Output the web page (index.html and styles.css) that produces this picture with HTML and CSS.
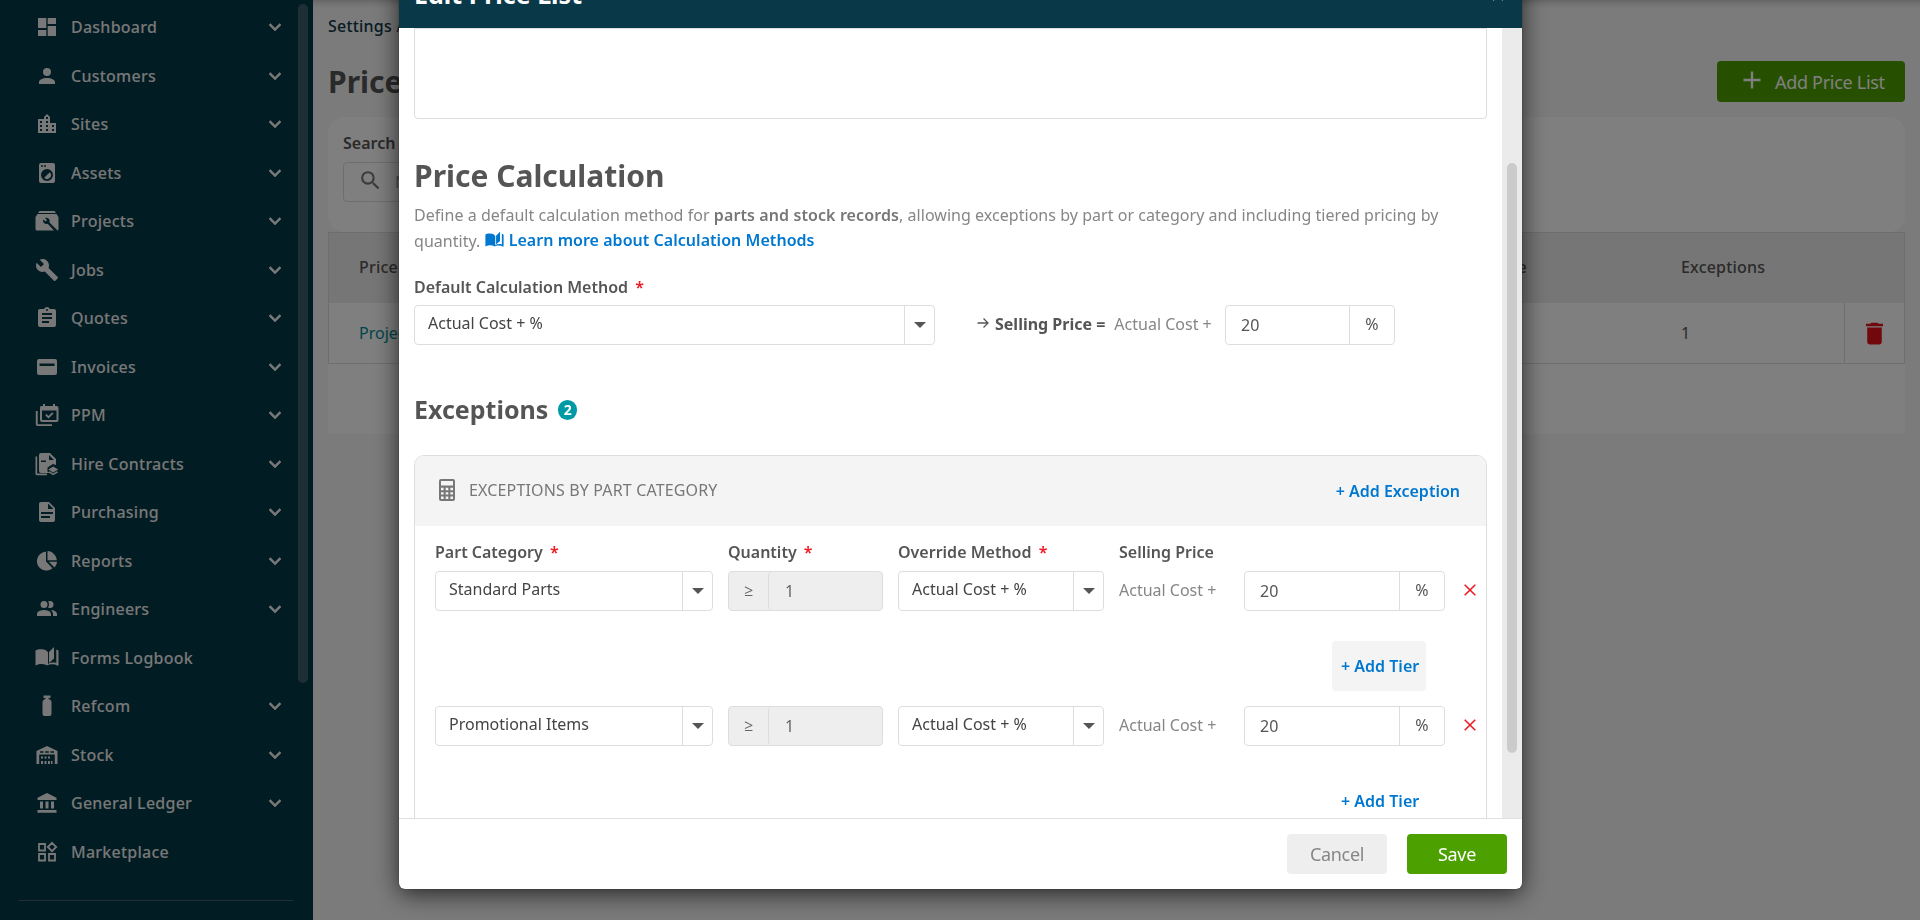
FILE: index.html
```html
<!DOCTYPE html>
<html lang="en">
<head>
    <meta charset="UTF-8">
    <meta name="viewport" content="width=device-width, initial-scale=1.0">
    <title>Price Lists</title>
    <link rel="stylesheet" href="styles.css">
</head>
<body>
    <svg class="defs">
        <symbol id="chevron" viewBox="0 0 24 24"><path d="M7.41 8.58L12 13.17l4.59-4.59L18 10l-6 6-6-6z"/></symbol>
        <symbol id="book" viewBox="0 0 24 24"><path fill-rule="evenodd" d="M0.5 4.5C3 2.9 8 2.6 11.5 4.5V19C8 17.6 4 17.6 1.3 19.2Q0.5 19.6 0.5 19zM19 1l-5 5v11l5-4.5zM23.5 4.6q-1-.7-2.2-1V17c-2.700-.8-6-.5-8.300 1V6l-1.500-1v14.5c3.500-1.700 8-1.700 10.700 0 .7.4 1.300.200 1.300-.5z"/></symbol>
    </svg>
    <div class="app">
        <nav class="sidebar">
            <ul class="menu">
                <li><svg class="icon" viewBox="0 0 24 24"><path d="M3 13h8.300V3H3zM3 21h8.300v-6H3zM12.700 21H21V11h-8.300zM12.700 3v6H21V3z"/></svg><span>Dashboard</span><svg class="chev"><use href="#chevron"/></svg></li>
                <li><svg class="icon" viewBox="0 0 24 24"><path d="M12 4a4 4 0 0 1 4 4 4 4 0 0 1-4 4 4 4 0 0 1-4-4 4 4 0 0 1 4-4m0 10c4.420 0 8 1.790 8 4v2H4v-2c0-2.210 3.580-4 8-4z"/></svg><span>Customers</span><svg class="chev"><use href="#chevron"/></svg></li>
                <li><svg class="icon" viewBox="0 0 24 24"><path d="M19 15h-2v-2h2m0 6h-2v-2h2M13 7h-2V5h2m0 6h-2V9h2m0 6h-2v-2h2m0 6h-2v-2h2M7 11H5V9h2m0 6H5v-2h2m0 6H5v-2h2m8-6V5l-3-3-3 3v2H3v14h18V11z"/></svg><span>Sites</span><svg class="chev"><use href="#chevron"/></svg></li>
                <li><svg class="icon" viewBox="0 0 24 24"><path d="M14.830 11.170a4 4 0 0 1 0 5.660 4 4 0 0 1-5.660 0zM6 2h12a2 2 0 0 1 2 2v16a2 2 0 0 1-2 2H6a2 2 0 0 1-2-2V4a2 2 0 0 1 2-2m1 2a1 1 0 0 0-1 1 1 1 0 0 0 1 1 1 1 0 0 0 1-1 1 1 0 0 0-1-1m3 0a1 1 0 0 0-1 1 1 1 0 0 0 1 1 1 1 0 0 0 1-1 1 1 0 0 0-1-1m2 4a6 6 0 0 0-6 6 6 6 0 0 0 6 6 6 6 0 0 0 6-6 6 6 0 0 0-6-6z"/></svg><span>Assets</span><svg class="chev"><use href="#chevron"/></svg></li>
                <li><svg class="icon" viewBox="0 0 24 24"><path fill-rule="evenodd" d="M4.500 2h15l1.500 2H3zM2.500 5h19L23.500 8v12a1.500 1.500 0 0 1-1 1.500L14.500 13.500c.5-1.600 0-3-1-4-1-.9-2.400-1.100-3.600-.6l2.200 2.200-1.500 1.500-2.200-2.200c-.6 1.300-.3 2.700.6 3.600 1 1 2.500 1.300 3.700.8L19 21.500H2A1.500 1.500 0 0 1 .5 20V8z"/></svg><span>Projects</span><svg class="chev"><use href="#chevron"/></svg></li>
                <li><svg class="icon" viewBox="0 0 24 24"><path d="M22.700 19l-9.100-9.100c.9-2.300.4-5-1.500-6.900-2-2-5-2.400-7.400-1.300L9 6 6 9 1.600 4.700C.4 7.100.9 10.100 2.900 12.100c1.900 1.900 4.600 2.400 6.900 1.500l9.100 9.100c.4.4 1 .4 1.400 0l2.300-2.300c.5-.4.5-1.100.1-1.400z"/></svg><span>Jobs</span><svg class="chev"><use href="#chevron"/></svg></li>
                <li><svg class="icon" viewBox="0 0 24 24"><path d="M17 9H7V7h10m0 6H7v-2h10m-3 6H7v-2h7M12 3a1 1 0 0 1 1 1 1 1 0 0 1-1 1 1 1 0 0 1-1-1 1 1 0 0 1 1-1m7 0h-4.180C14.400 1.840 13.300 1 12 1s-2.400.84-2.820 2H5a2 2 0 0 0-2 2v14a2 2 0 0 0 2 2h14a2 2 0 0 0 2-2V5a2 2 0 0 0-2-2z"/></svg><span>Quotes</span><svg class="chev"><use href="#chevron"/></svg></li>
                <li><svg class="icon" viewBox="0 0 24 24"><path fill-rule="evenodd" d="M4 4h16a2 2 0 0 1 2 2v12a2 2 0 0 1-2 2H4a2 2 0 0 1-2-2V6a2 2 0 0 1 2-2zm.5 4.500v2.500h15V8.500z"/></svg><span>Invoices</span><svg class="chev"><use href="#chevron"/></svg></li>
                <li><svg class="icon" viewBox="0 0 24 24"><path fill-rule="evenodd" d="M8 1h2v2h8V1h2v2h1.500a2 2 0 0 1 2 2v12a2 2 0 0 1-2 2H7a2 2 0 0 1-2-2V5a2 2 0 0 1 1-2h2zM7 7.500V17h14.500V7.500zM11.500 11l2 2 3.700-3.700 1.300 1.300-5 5-3.300-3.300zM.8 8h1.900v13.200H17V23H2.500a1.700 1.700 0 0 1-1.700-1.700z"/></svg><span>PPM</span><svg class="chev"><use href="#chevron"/></svg></li>
                <li><svg class="icon" viewBox="0 0 24 24"><path fill-rule="evenodd" d="M6 1h9l6 6v6l-3-1-5.500 3.500v4l1.500 1.500H6a2 2 0 0 1-2-2V3a2 2 0 0 1 2-2zM14 3v5h5zM6 8.500V10h5V8.500zM.5 4.500h1.700v17H12V23.200H2A1.500 1.500 0 0 1 .5 21.700zM18.200 14.500l5 3-5 3-5-3zM14.500 19.200l3.700 2.200 3.700-2.200 1.300 1-5 3-5-3z"/></svg><span>Hire Contracts</span><svg class="chev"><use href="#chevron"/></svg></li>
                <li><svg class="icon" viewBox="0 0 24 24"><path d="M13 9h5.500L13 3.500V9M6 2h8l6 6v12a2 2 0 0 1-2 2H6a2 2 0 0 1-2-2V4c0-1.110.89-2 2-2m9 16v-2H6v2h9m3-4v-2H6v2h12z"/></svg><span>Purchasing</span><svg class="chev"><use href="#chevron"/></svg></li>
                <li><svg class="icon" viewBox="0 0 24 24"><path d="M11 2.800V12.500l6.500 6.800A9.400 9.400 0 1 1 11 2.800zM12.500 2c5 .3 9 4.300 9.300 9.300h-9.300zM13.800 12.800H22c-.2 2.200-1 4-2.500 5.600z"/></svg><span>Reports</span><svg class="chev"><use href="#chevron"/></svg></li>
                <li><svg class="icon" viewBox="0 0 24 24"><path d="M16 17v2H2v-2s0-4 7-4 7 4 7 4m-3.500-9.500A3.500 3.500 0 1 0 9 11a3.500 3.500 0 0 0 3.500-3.500m3.440 5.500A5.320 5.320 0 0 1 18 17v2h4v-2s0-3.630-6.060-4M15 4a3.390 3.390 0 0 0-1.930.59 5 5 0 0 1 0 5.820A3.390 3.390 0 0 0 15 11a3.500 3.500 0 0 0 0-7z"/></svg><span>Engineers</span><svg class="chev"><use href="#chevron"/></svg></li>
                <li><svg class="icon"><use href="#book"/></svg><span>Forms Logbook</span></li>
                <li><svg class="icon" viewBox="0 0 24 24"><path d="M8.500 1.500h7V4h-2v1c2 .5 3 1.800 3 3.500v11.500a2 2 0 0 1-2 2h-5a2 2 0 0 1-2-2V8.500c0-1.700 1-3 3-3.500V4h-2z"/></svg><span>Refcom</span><svg class="chev"><use href="#chevron"/></svg></li>
                <li><svg class="icon" viewBox="0 0 24 24"><path d="M12 3L1.500 8v13h2.700v-9.500h15.600V21h2.700V8zM5 8.200h3.500v1.500H5zm5.200 0h3.600v1.500h-3.600zm5.300 0H19v1.500h-3.500zM6 13.500h2v2H6zm3.500 0h2v2h-2zm3.500 0h2v2h-2zM6 18h2v3H6zm3.500 0h2v3h-2zm3.500 0h2v3h-2zm3 0h1.500v3H16z" fill-rule="evenodd"/></svg><span>Stock</span><svg class="chev"><use href="#chevron"/></svg></li>
                <li><svg class="icon" viewBox="0 0 24 24"><path d="M12 2l-9.500 4.800V9h19V6.800zM5 10.500v7h3v-7zm5.500 0v7h3v-7zm5.500 0v7h3v-7zM2.500 19v2.700h19V19z"/></svg><span>General Ledger</span><svg class="chev"><use href="#chevron"/></svg></li>
                <li><svg class="icon" viewBox="0 0 24 24"><path fill="none" stroke="#f0f0f0" stroke-width="1.800" d="M4 4h6v6.500H4zM17 2.800l4.200 4.200L17 11.200 12.800 7zM4 14h6v6.500H4zM14 14h6v6.500h-6z"/></svg><span>Marketplace</span></li>
            </ul>
            <div class="divider"></div>
            <div class="side-scroll"></div>
        </nav>

        <main class="page">
            <div class="crumbs">Settings <span>/</span> Price Lists</div>
            <div class="title-row">
                <h1>Price Lists</h1>
                <button class="btn-add"><svg viewBox="0 0 24 24"><path d="M20.500 13.200h-7.300V20.500h-2.400v-7.300H3.500v-2.400h7.300V3.500h2.400v7.300h7.300z"/></svg>Add Price List</button>
            </div>
            <div class="search-card">
                <label>Search</label>
                <div class="search-box">
                    <svg viewBox="0 0 24 24"><path d="M9.500 3A6.500 6.500 0 0 1 16 9.500c0 1.610-.59 3.090-1.560 4.230l.27.27h.79l5 5-1.500 1.500-5-5v-.79l-.27-.27A6.520 6.520 0 0 1 9.500 16a6.500 6.500 0 0 1 0-13m0 2a4.500 4.500 0 1 0 0 9 4.500 4.500 0 0 0 0-9z"/></svg>
                    <span>Name</span>
                </div>
            </div>
            <div class="table">
                <div class="tr th"><span>Price List Name</span><span class="end">Selling Price</span><span>Exceptions</span><span></span></div>
                <div class="tr td"><span class="link">Project Prices</span><span></span><span>1</span><span class="del"><svg viewBox="0 0 24 24"><path d="M19 4h-3.500l-1-1h-5l-1 1H5v2h14M6 19a2 2 0 0 0 2 2h8a2 2 0 0 0 2-2V7H6v12z"/></svg></span></div>
            </div>
        </main>
    </div>

    <div class="overlay">
        <div class="modal">
            <div class="modal-head"><span>Edit Price List</span><svg viewBox="0 0 12 12"><path d="M1 1l10 10M11 1L1 11"/></svg></div>
            <div class="modal-main">
                <div class="modal-body">
                    <div class="notes"></div>
                    <h2>Price Calculation</h2>
                    <p class="intro">Define a default calculation method for <b>parts and stock records</b>, allowing exceptions by part or category and including tiered pricing by quantity. <a><svg><use href="#book"/></svg>Learn more about Calculation Methods</a></p>
                    <label class="default-label">Default Calculation Method <i>*</i></label>
                    <div class="default-row">
                        <div class="select"><span>Actual Cost + %</span><em></em></div>
                        <div class="formula">
                            <svg viewBox="0 0 12 12"><path d="M0.500 6h10.500M6.500 1.500L11 6l-4.500 4.500"/></svg>
                            <b>Selling Price =</b>
                            <span>Actual Cost +</span>
                        </div>
                        <div class="amount"><span>20</span><em>%</em></div>
                    </div>
                    <h3>Exceptions <span class="badge">2</span></h3>
                    <section class="panel">
                        <div class="panel-head">
                            <svg viewBox="0 0 16 22"><path fill-rule="evenodd" d="M2 0h12a2 2 0 0 1 2 2v18a2 2 0 0 1-2 2H2a2 2 0 0 1-2-2V2a2 2 0 0 1 2-2zM2 2v4.500h12V2zM2 8.800v2.400h2.600V8.800zm4.700 0v2.400h2.600V8.800zm4.700 0v2.400H14V8.800zM2 13.200v2.400h2.600v-2.400zm4.700 0v2.400h2.600v-2.400zm4.700 0v2.400H14v-2.400zM2 17.600V20h2.600v-2.400zm4.700 0V20h2.600v-2.400zm4.700 0V20H14v-2.400z"/></svg>
                            <span>EXCEPTIONS BY PART CATEGORY</span>
                            <a>+ Add Exception</a>
                        </div>
                        <div class="grid labels">
                            <label>Part Category <i>*</i></label>
                            <label>Quantity <i>*</i></label>
                            <label>Override Method <i>*</i></label>
                            <label>Selling Price</label>
                        </div>
                        <div class="grid">
                            <div class="select"><span>Standard Parts</span><em></em></div>
                            <div class="qty"><em>≥</em><span>1</span></div>
                            <div class="select"><span>Actual Cost + %</span><em></em></div>
                            <div class="cost">Actual Cost +</div>
                            <div class="amount"><span>20</span><em>%</em></div>
                            <svg class="remove" viewBox="0 0 12 12"><path d="M.7.7l10.600 10.600M11.300.7L.7 11.300"/></svg>
                        </div>
                        <div class="tier"><a class="hover">+ Add Tier</a></div>
                        <div class="grid">
                            <div class="select"><span>Promotional Items</span><em></em></div>
                            <div class="qty"><em>≥</em><span>1</span></div>
                            <div class="select"><span>Actual Cost + %</span><em></em></div>
                            <div class="cost">Actual Cost +</div>
                            <div class="amount"><span>20</span><em>%</em></div>
                            <svg class="remove" viewBox="0 0 12 12"><path d="M.7.7l10.600 10.600M11.300.7L.7 11.300"/></svg>
                        </div>
                        <div class="tier"><a>+ Add Tier</a></div>
                    </section>
                </div>
                <div class="scrollbar"><div class="thumb"></div></div>
            </div>
            <div class="modal-foot">
                <button class="cancel">Cancel</button>
                <button class="save">Save</button>
            </div>
        </div>
    </div>
</body>
</html>
```
FILE: styles.css
```css
*{
    box-sizing: border-box;
}
body{
    margin: 0;
    height: 920px;
    overflow: hidden;
    font-family: "Noto Sans", "Open Sans", sans-serif;
    font-size: 16px;
    line-height: 24px;
    color: #555;
}
.defs{
    position: absolute;
    width: 0;
    height: 0;
}
h1, h2, h3, p, ul{
    margin: 0;
    padding: 0;
}
i, em{
    font-style: normal;
}
button{
    font-family: inherit;
    font-size: 18px;
    letter-spacing: -.3px;
    border: none;
    border-radius: 4px;
    padding: 0;
}
label{
    display: block;
    font-weight: 600;
}
label i{
    color: #ed1c24;
    margin-left: 3px;
}
.app{
    display: flex;
    height: 920px;
}

/* sidebar */
.sidebar{
    position: relative;
    width: 313px;
    flex: none;
    background: #053846;
    padding-top: 3px;
}
.menu{
    list-style: none;
}
.menu li{
    display: flex;
    align-items: center;
    height: 48.5px;
    padding: 0 26px 0 34.5px;
    color: #f0f0f0;
    font-weight: 500;
    letter-spacing: .25px;
}
.menu span{
    flex: 1;
    margin-left: 12.5px;
}
.icon, .chev{
    width: 24px;
    height: 24px;
    fill: #f0f0f0;
}
.chev{
    stroke: #f0f0f0;
    stroke-width: .6;
}
.divider{
    height: 1px;
    margin: 24px 20px 0 19px;
    background: #3f5c68;
}
.side-scroll{
    position: absolute;
    left: 298px;
    top: 4px;
    width: 10px;
    height: 679px;
    border-radius: 5px;
    background: #3a5f6a;
}

/* page behind the dialog */
.page{
    flex: 1;
    padding: 14px 15px 0;
    background: #f7f7f7;
    box-shadow: inset 0 8px 10px -8px rgba(0,0,0,.35);
}
.crumbs{
    height: 24px;
    font-weight: 500;
    letter-spacing: .2px;
    color: #0a3846;
}
.crumbs span{
    color: #555;
}
.title-row{
    display: flex;
    justify-content: space-between;
    height: 41px;
    margin: 23px 0 15px;
}
h1{
    font-size: 30px;
    line-height: 41px;
}
.btn-add{
    display: flex;
    align-items: center;
    width: 188px;
    height: 41px;
    padding-left: 23px;
    background: #4ca000;
    color: #fff;
}
.btn-add svg{
    width: 24px;
    height: 24px;
    margin: -3px 11px 0 0;
    fill: #fff;
}
.search-card{
    height: 115px;
    padding: 14px 15px;
    border-radius: 16px;
    background: #fff;
}
.search-box{
    display: flex;
    align-items: center;
    width: 400px;
    height: 40px;
    margin-top: 7px;
    padding-left: 14px;
    border: 1px solid #ddd;
    border-radius: 4px;
    color: #999;
}
.search-box svg{
    width: 25px;
    height: 25px;
    margin: -4px 12px 0 0;
    fill: #777;
}
.table{
    height: 202px;
    background: #fff;
}
.tr{
    display: grid;
    grid-template-columns: 600px 1fr 192px 60px;
    align-items: center;
    border: 1px solid #ddd;
    border-top: none;
    padding-left: 30px;
}
.tr span:nth-child(3){
    padding-left: 29px;
}
.th{
    height: 71px;
    padding-bottom: 2px;
    background: #ececec;
    border-top: 1px solid #ddd;
    border-bottom: none;
    font-weight: 500;
    letter-spacing: .2px;
}
.end{
    padding-right: 125px;
    text-align: right;
}
.td{
    height: 61px;
}
.link{
    color: #008c95;
}
.del{
    display: flex;
    justify-content: center;
    align-items: center;
    align-self: stretch;
    border-left: 1px solid #ddd;
}
.del svg{
    width: 29px;
    height: 29px;
    fill: #e01018;
}

/* dialog */
.overlay{
    position: fixed;
    inset: 0;
    background: rgba(0,0,0,.5);
}
.modal{
    display: flex;
    flex-direction: column;
    width: 1123px;
    height: 929px;
    margin: -40px 0 0 399px;
    border-radius: 6px;
    background: #fff;
    box-shadow: 0 5px 25px rgba(0,0,0,.7), 0 0 1px rgba(0,0,0,.9);
    overflow: hidden;
}
.modal-head{
    display: flex;
    justify-content: space-between;
    height: 68px;
    padding: 16px 18px 0 15px;
    background: #093848;
    color: #fff;
    font-size: 25px;
    font-weight: 700;
    line-height: 36px;
}
.modal-head svg{
    width: 12px;
    height: 12px;
    margin-top: 13px;
    stroke: #ddd;
    stroke-width: 1.8;
}
.modal-main{
    display: flex;
    height: 791px;
    border-bottom: 1px solid #e0e0e0;
    overflow: hidden;
}
.modal-body{
    width: 1103px;
    padding: 0 15px;
}
.scrollbar{
    width: 20px;
    padding: 135px 5px 0;
    background: #ebebeb;
}
.thumb{
    height: 590px;
    border-radius: 5px;
    background: #cbcbcb;
}
.notes{
    height: 91px;
    border: 1px solid #ddd;
    border-radius: 0 0 4px 4px;
}
h2{
    margin: 37px 0 6px;
    font-size: 30px;
    line-height: 40px;
}
.intro{
    line-height: 26px;
    letter-spacing: .04px;
    color: #868686;
}
.intro b{
    font-weight: 600;
    color: #777;
    letter-spacing: .1px;
}
a{
    color: #0078d0;
    font-weight: 600;
}
.intro a{
    position: relative;
    top: -1px;
}
.intro svg{
    width: 19px;
    height: 19px;
    margin-right: 5px;
    vertical-align: -4px;
    fill: #0078d0;
}
.default-label{
    margin: 21px 0 6px;
}
.default-row{
    display: flex;
}
.default-row .select{
    width: 521px;
}
.default-row .amount{
    width: 170px;
}
.select, .amount, .qty{
    display: flex;
    height: 40px;
    border: 1px solid #ddd;
    border-radius: 4px;
    line-height: 37px;
    color: #444;
}
.select span{
    flex: 1;
    padding-left: 13px;
    line-height: 35px;
}
.select em{
    display: flex;
    align-items: center;
    justify-content: center;
    width: 30px;
    border-left: 1px solid #ddd;
}
.select em::after{
    content: "";
    border: 6px solid transparent;
    border-top-color: #555;
    border-bottom: none;
}
.amount{
    color: #555;
}
.amount span{
    flex: 1;
    padding-left: 15px;
    line-height: 39px;
}
.amount em{
    width: 45px;
    border-left: 1px solid #ddd;
    text-align: center;
}
.qty{
    background: #eee;
    color: #666;
}
.qty em{
    width: 39px;
    text-align: center;
}
.qty span{
    flex: 1;
    padding-left: 16px;
    border-left: 1px solid #ddd;
    border-radius: 4px;
    line-height: 39px;
}
.formula{
    display: flex;
    align-items: center;
    width: 290px;
    padding: 0 0 2px 42px;
    line-height: 37px;
}
.formula svg{
    width: 12px;
    height: 12px;
    margin: -2px 6px 0 0;
    fill: none;
    stroke: #555;
    stroke-width: 1.3;
}
.formula b{
    margin-right: 9px;
    font-weight: 700;
}
.formula span, .cost{
    color: #868686;
}
h3{
    display: flex;
    align-items: center;
    margin: 46px 0 28px;
    font-size: 25px;
    line-height: 36px;
}
.badge{
    margin: 2px 0 0 10px;
    width: 19px;
    height: 20px;
    border-radius: 10px;
    background: #009aa6;
    color: #fff;
    font-size: 14px;
    line-height: 20px;
    text-align: center;
}
.panel{
    height: 480px;
    border: 1px solid #ddd;
    border-radius: 10px;
    overflow: hidden;
}
.panel-head{
    display: flex;
    align-items: center;
    height: 70px;
    padding: 0 26px 0 24px;
    background: #f4f4f4;
    color: #777;
}
.panel-head svg{
    width: 16px;
    height: 22px;
    margin: -3px 14px 0 0;
    fill: #777;
}
.panel-head span{
    flex: 1;
    margin-top: -2px;
    letter-spacing: .15px;
}
.grid{
    display: grid;
    grid-template-columns: 278px 155px 206px 110px 201px 12px;
    column-gap: 15px;
    align-items: center;
    height: 40px;
    padding-left: 20px;
}
.labels{
    height: 45px;
    align-items: start;
    padding-top: 14px;
}
.cost{
    line-height: 36px;
    margin-top: -2px;
}
.remove{
    width: 12px;
    height: 12px;
    margin: -3px 0 0 4px;
    stroke: #ed1c24;
    stroke-width: 1.600;
}
.tier{
    display: flex;
    justify-content: flex-end;
    padding: 30px 60px 15px 0;
}
.tier a{
    width: 94px;
    height: 50px;
    padding: 0 0 0 9px;
    border-radius: 4px;
    line-height: 50px;
    white-space: nowrap;
}
.tier .hover{
    background: #f4f4f4;
}
.modal-foot{
    display: flex;
    justify-content: flex-end;
    gap: 20px;
    padding: 15px 15px 15px;
}
.modal-foot button{
    width: 100px;
    height: 40px;
}
.cancel{
    background: #eee;
    color: #868686;
}
.save{
    background: #4ca000;
    color: #fff;
}
```
